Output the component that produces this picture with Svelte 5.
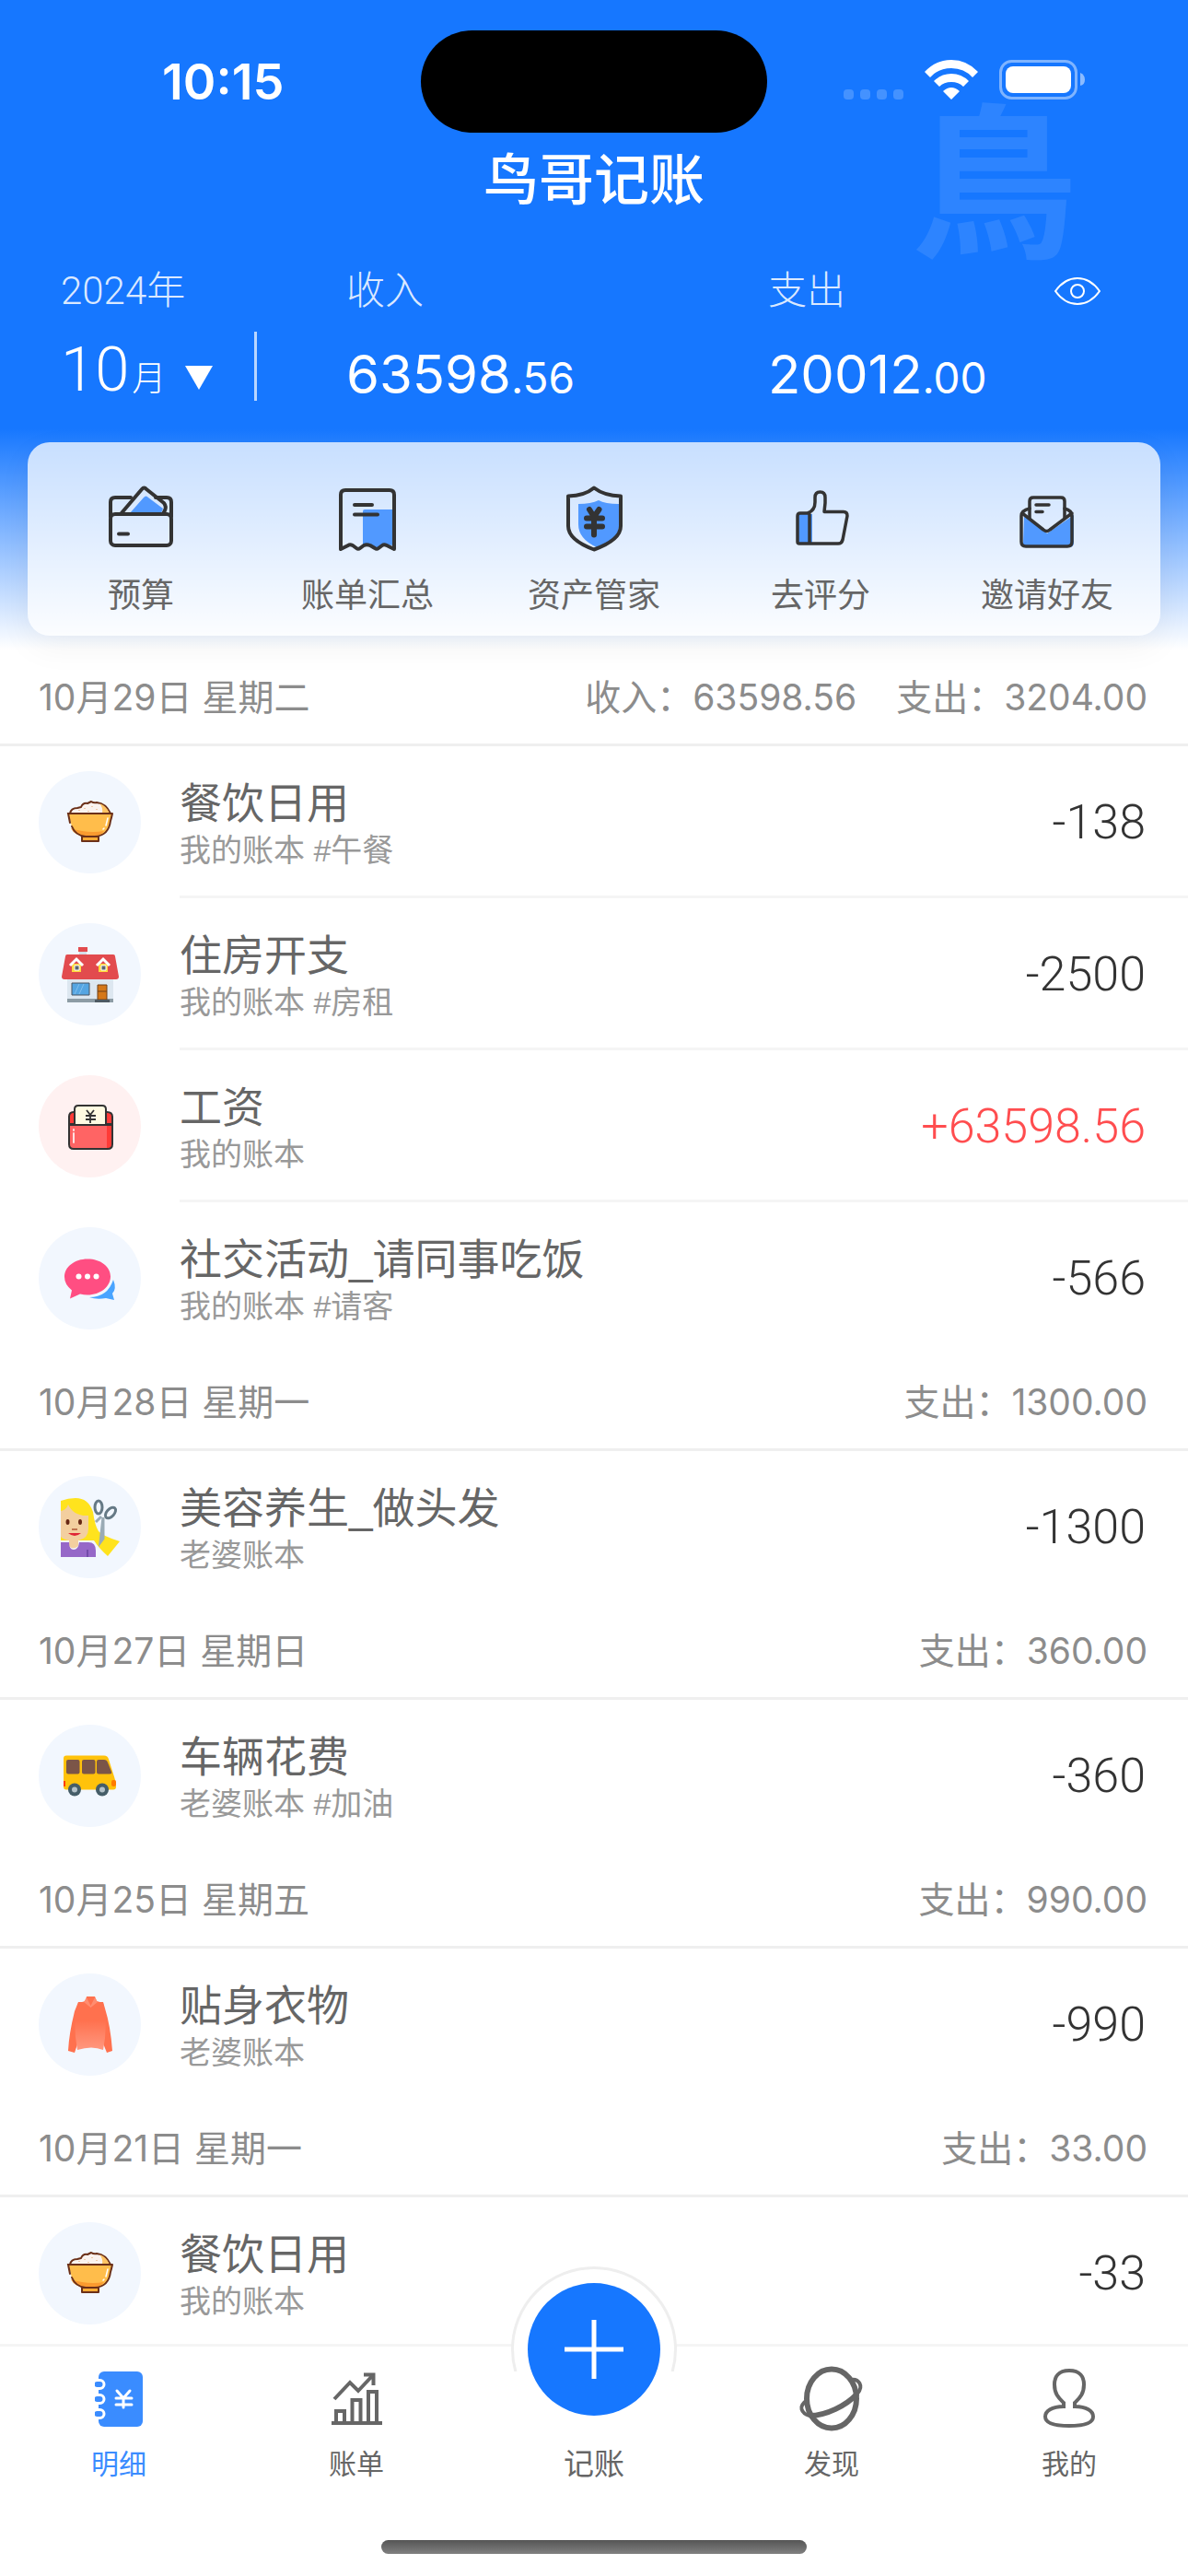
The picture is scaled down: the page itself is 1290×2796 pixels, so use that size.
<script>
  const actions = [
    { icon: 'wallet', label: '预算' },
    { icon: 'receipt', label: '账单汇总' },
    { icon: 'shield', label: '资产管家' },
    { icon: 'thumb', label: '去评分' },
    { icon: 'mail', label: '邀请好友' }
  ];

  const days = [
    {
      date: '10月29日 星期二',
      totals: ['收入：63598.56', '支出：3204.00'],
      items: [
        { icon: 'bowl', title: '餐饮日用', note: '我的账本 #午餐', amount: '-138' },
        { icon: 'house', title: '住房开支', note: '我的账本 #房租', amount: '-2500' },
        { icon: 'salary', title: '工资', note: '我的账本', amount: '+63598.56', income: true },
        { icon: 'chat', title: '社交活动_请同事吃饭', note: '我的账本 #请客', amount: '-566' }
      ]
    },
    {
      date: '10月28日 星期一',
      totals: ['支出：1300.00'],
      items: [{ icon: 'hair', title: '美容养生_做头发', note: '老婆账本', amount: '-1300' }]
    },
    {
      date: '10月27日 星期日',
      totals: ['支出：360.00'],
      items: [{ icon: 'bus', title: '车辆花费', note: '老婆账本 #加油', amount: '-360' }]
    },
    {
      date: '10月25日 星期五',
      totals: ['支出：990.00'],
      items: [{ icon: 'coat', title: '贴身衣物', note: '老婆账本', amount: '-990' }]
    },
    {
      date: '10月21日 星期一',
      totals: ['支出：33.00'],
      items: [{ icon: 'bowl', title: '餐饮日用', note: '我的账本', amount: '-33' }]
    }
  ];

  const tabs = [
    { icon: 'book', label: '明细', active: true },
    { icon: 'chart', label: '账单' },
    { icon: 'add', label: '记账' },
    { icon: 'planet', label: '发现' },
    { icon: 'person', label: '我的' }
  ];
</script>

{#snippet actionIcon(name)}
  <svg class="icon" viewBox="0 0 72 72" aria-hidden="true">
    {#if name === 'wallet'}
      <path class="fill" d="M24 26 39 9q2.500-3 5 0L60 21l-2 5z" />
      <g class="line">
        <path d="M3 30V14q0-5 5-5h17M52 9h12q5 0 5 5v16" />
        <path d="M14 27 37 0q2.500-3 5 0l19 15q3 4 1 8l-2 4" />
        <rect x="3" y="27" width="66" height="34" rx="5" />
        <path d="M12 48.500h10" />
      </g>
    {:else if name === 'receipt'}
      <path class="fill" d="M31 24q0-2 2-2h31v39l-9-1-9 4-10-4-5 1z" />
      <g class="line">
        <path d="M7 65V6q0-5 5-5h48q5 0 5 5v59l-8-4q-3-1.500-5 0l-4 3q-2 1.500-4 0l-5-3q-4-1.500-7 0l-4 3q-2 1.500-4 0l-4-3q-3-1.500-5 0z" />
        <path d="M22 17h19M22 27.500h25" />
      </g>
    {:else if name === 'shield'}
      <path class="fill" d="M19 16q14 0 22-4 7 4 22 4v25q0 14-24 22-20-9-20-25z" />
      <path class="line" d="M36-1.500Q26 7 8 7.500V40q0 15 28 25.500Q65 55 65 40V7.500Q47 7 36-1.500z" />
      <path class="line bold" d="m31 22 5 8 5.500-8M28 31.500h17M28 40.500h17M36 31v18.500" />
    {:else if name === 'thumb'}
      <path class="fill" d="M12 27h15v33H12z" />
      <path class="line slim" d="M24 59H13q-2 0-2-2V29q0-3 3-3h8q8-3 8-12V9q0-6 5.500-6T41 9v6l-1 9.500h21q4 0 4 4.500l-5 26q-1 4-5 4H24V27" />
    {:else if name === 'mail'}
      <path class="fill" d="m11 29 25 19 29-20v30q0 5-5 5H13q-3 0-3-4z" />
      <g class="line slim">
        <path d="M17 31V13q0-4 4-4h30q4 0 4 4v18" />
        <path d="M17 21q-9 2-9 8v28q0 5 5 5h45q5 0 5-5V29q0-6-8-8M9 26l23 18q3.500 3 7 0l24-18" />
        <path d="M24 17h14M24 24.500h7" />
      </g>
    {/if}
  </svg>
{/snippet}

{#snippet categoryIcon(name)}
  <svg class="icon" viewBox="0 0 72 72" aria-hidden="true">
    {#if name === 'bowl'}
      <path d="M14 26q1-6 8-6l4-1q2-5 7-4l4-2q3 2 6 1 10 1 15 12z" fill="#faf3ef" stroke="#6b3018" stroke-width="2" stroke-linejoin="round" />
      <path d="M46 15q8 3 11 11h-8q1-7-3-11z" fill="#ffc463" />
      <path d="M12 26h48q-1 5-2 8-2 16-17 17H31Q17 50 15 36z" fill="#ffbd4b" />
      <path d="M15 42q18 6 36 3-5 6-12 6h-8q-12-1-16-9z" fill="#fa9a2f" />
      <path d="M60 26q-1 5-2 8-2 16-17 17H31Q20 50 16 40M14 36l-2-10h48" fill="none" stroke="#6b3018" stroke-width="2" stroke-linecap="round" />
      <path d="M27 51h18v5H27z" fill="#ffab35" stroke="#6b3018" stroke-width="2" stroke-linejoin="round" />
      <path d="m55 31-2 8M51 42l-1 1" stroke="#fff" stroke-width="1.500" stroke-linecap="round" />
      <path d="M24 22v1M30 20v1M34 23v1M38 18v1M43 21v1" stroke="#eebf91" stroke-width="1.500" />
    {:else if name === 'house'}
      <path d="M24 9h8v8h-8z" fill="#d4dee8" />
      <path d="M23 6h10v5H23z" fill="#e24b4e" />
      <path d="M11 39h50v24H11z" fill="#dde7f0" />
      <path d="M11 62h50v4H11z" fill="#8d9ca5" />
      <path d="M11 14h50q2 0 2 2l4 22q0 3-3 3H8q-3 0-3-3l4-22q0-2 2-2z" fill="#e24b4e" />
      <path d="M16 24h10v9H16zM45 24h10v9H45z" fill="#ffd83f" />
      <path d="m14 26 7-7 7 7M43 26l7-7 7 7" fill="none" stroke="#fff" stroke-width="3" />
      <path d="M19 26h5v5h-5zM48 26h5v5h-5z" fill="#5a6570" stroke="#fff" />
      <path d="M16 45h19v13H16z" fill="#55a5e2" stroke="#485563" />
      <path d="m19 57 5-11m0 11 5-11" stroke="#82c0ee" />
      <path d="M44 47h10v16H44z" fill="#d57718" stroke="#6e3e16" />
      <path d="M44 54h10" stroke="#6e3e16" />
      <path d="M41 63h16v3H41z" fill="#4e5a63" />
    {:else if name === 'salary'}
      <path d="M13 33V25q0-5 5-5h36q6 0 6 5v8z" fill="#ff3b37" stroke="#333" stroke-width="2" />
      <path d="M19 34V17q0-4 4-4h26q4 0 4 4v17z" fill="#fffbe2" stroke="#333" stroke-width="2" />
      <path d="M13 34h47v21q0 5-5 5H18q-5 0-5-5z" fill="#ff6464" />
      <path d="M54 34h6v21q0 5-6 5z" fill="#ff3b37" />
      <path d="M13 34h47v21q0 5-5 5H18q-5 0-5-5z" fill="none" stroke="#333" stroke-width="2" />
      <path d="m32 18 4 5 4-5M31 24h11M31 28h11M36 23v9" fill="none" stroke="#333" stroke-width="1.800" />
      <path d="M18 43v10M18 39v1" stroke="#ffe1e1" stroke-width="2" stroke-linecap="round" />
    {:else if name === 'chat'}
      <path d="M61 37q4 10-1 15l2 7-9-2q-10 2-18-1 20 0 26-19z" fill="#49a4ff" />
      <path d="M33 14.500c14 0 25 8 25 19s-11 20-25 20q-4 0-8-1l-11 5 2-9Q8 42 8 34c0-11 11-19.500 25-19.500z" fill="#ff4e82" />
      <g fill="#fff"><circle cx="23.500" cy="33.500" r="3" /><circle cx="33" cy="33.500" r="3" /><circle cx="42.500" cy="33.500" r="3" /></g>
    {:else if name === 'hair'}
      <path d="M4 7Q12 4 20 4q14 0 19 15 2 15 6 21 4 5 23 11L55 67Q45 58 40 50H4z" fill="#ffe31d" />
      <path d="M4 18q6-1 8-7 6 13 22 12v14q0 11-11 13v6q-6 5-10 0v-6q-6-1-9-4z" fill="#f3cf9f" />
      <path d="M4 52h9q0 8 5 8t6-8h10q8 0 8 9v7H4z" fill="#9668c8" />
      <path d="M33 60v8" stroke="#744caa" stroke-width="2" />
      <ellipse cx="11.500" cy="30" rx="2" ry="3" fill="#672814" /><ellipse cx="25" cy="30" rx="2" ry="3" fill="#672814" />
      <path d="M16 38h6" stroke="#bf754f" stroke-width="2" />
      <path d="M12 42h14q-7 6-14 0z" fill="#df2535" />
      <path d="m42 30 6-6M50 25v23l-3 4z" fill="none" stroke="#9aabb5" stroke-width="3" />
      <g fill="none" stroke="#657985" stroke-width="3"><ellipse cx="45" cy="14" rx="4" ry="7" /><ellipse cx="58" cy="20" rx="4" ry="7" transform="rotate(42 58 20)" /></g>
    {:else if name === 'bus'}
      <path d="M10 13.500h41q4 0 5 4l6 19q2 5 2 11 0 3-3 3H10q-3 0-3-3v-31q0-3 3-3z" fill="#ffc20b" />
      <g fill="#7b5548"><rect x="10" y="18" width="14.500" height="15.500" rx="2" /><rect x="27" y="18" width="14.500" height="15.500" rx="2" /><path d="M45 18h6q3 0 4 3l4 10q1 2.500-2 2.500H45q-2 0-2-2V20q0-2 2-2z" /></g>
      <path d="M7 41h2v6H7z" fill="#ff3d00" /><rect x="59" y="40" width="5" height="7" rx="2" fill="#ff7b00" />
      <g fill="#455d68"><circle cx="19" cy="50.500" r="7" /><circle cx="49" cy="50.500" r="7" /></g>
      <g fill="#b4c2c9"><circle cx="19" cy="50.500" r="3" /><circle cx="49" cy="50.500" r="3" /></g>
    {:else if name === 'coat'}
      <defs><linearGradient id="coat" x2="0" y2="1"><stop offset=".45" stop-color="#ff714e" /><stop offset="1" stop-color="#ff9880" /></linearGradient></defs>
      <path d="m23 11-4 10Q13 45 12 64l7 2 3-9 28-1 4 10 6-2q-2-27-8-46l-2-7z" fill="#ff714e" />
      <path d="M32 5h9l2 5 7 2q4 16 2 38l-2 13q-12-5-28 0l-2-14q-2-24 3-37l8-2z" fill="url(#coat)" />
      <path d="m32 6 4.500 9L41 6l3 5-7.500 6L29 11z" fill="#ff8d70" />
    {/if}
  </svg>
{/snippet}

{#snippet tabIcon(name)}
  <svg class="icon" viewBox="0 0 72 72" aria-hidden="true">
    {#if name === 'book'}
      <rect x="14" y="6" width="48" height="60" rx="6" fill="#3a8cff" />
      <g fill="#3a8cff" stroke="#fff" stroke-width="3"><rect x="8" y="15.500" width="12" height="9" rx="4.500" /><rect x="8" y="31.500" width="12" height="9" rx="4.500" /><rect x="8" y="47.500" width="12" height="9" rx="4.500" /></g>
      <path d="M7 14h3v44H7z" fill="#fff" />
      <path d="m34 27 7 8 7-8M33 35h17M33 42h17M41 35v10" fill="none" stroke="#fff" stroke-width="3" stroke-linecap="round" />
    {:else if name === 'chart'}
      <path class="tab-line" d="M9 62h55M14 61V49h9v12M31.500 61V37h9v24M49 61V28h9v33M12 36l17-18 9 9L54 10M44 9.500h10.500V21" />
    {:else if name === 'planet'}
      <ellipse class="tab-line heavy" cx="36" cy="35.500" rx="27" ry="32" />
      <path class="tab-line" d="M11 36Q2 42 3.500 47T12 54c18 0 40-11 52-24 7-8 2-17-8-15" />
      <path class="tab-line heavy" d="M12 54c18 0 40-11 52-24" />
    {:else if name === 'person'}
      <path class="tab-line" d="M36 5c12 0 16 7 16 15 0 11-5 15-10 20v4c13 0 20 5 20 11 0 8-12 10-26 10S10 63 10 55c0-6 7-11 20-11v-4c-5-5-10-9-10-20C20 12 24 5 36 5z" />
    {/if}
  </svg>
{/snippet}

<div class="app" lang="zh-CN">
  <header class="top">
    <span class="watermark" aria-hidden="true">鳥</span>

    <div class="status">
      <time class="clock">10:15</time>
      <span class="island"></span>
      <div class="signals">
        <span class="dots"><i></i><i></i><i></i><i></i></span>
        <svg class="wifi" viewBox="0 0 58 43" aria-label="Wi-Fi" role="img">
          <path d="M0 13Q12 0 29 0t29 13l-6 6Q43 9 29 9T6 19zM10 23q8-8 19-8t19 8l-6 6q-5-5-13-5t-13 5zM20 34q9-8 18 0l-9 9z" />
        </svg>
        <svg class="battery" viewBox="0 0 93 43" aria-label="Battery" role="img">
          <rect x="1.500" y="1.500" width="82" height="40" rx="12" fill="none" stroke="#fff" stroke-opacity=".45" stroke-width="3" />
          <rect x="7" y="7" width="71" height="29" rx="8" />
          <path d="M88 14q5 2 5 7.500T88 28z" fill-opacity=".5" />
        </svg>
      </div>
    </div>

    <h1>鸟哥记账</h1>

    <section class="summary">
      <div class="month">
        <span class="label">2024年</span>
        <button class="value picker" type="button">
          <span class="month-number">10</span><span class="month-unit">月</span>
          <svg class="caret" viewBox="0 0 32 28" aria-hidden="true"><path d="M1 1h30L16 27z" /></svg>
        </button>
      </div>
      <div class="income">
        <span class="label">收入</span>
        <strong class="value money">63598<small>.56</small></strong>
      </div>
      <div class="expense">
        <span class="label">支出</span>
        <strong class="value money">20012<small>.00</small></strong>
      </div>
      <button class="eye" type="button" aria-label="隐藏金额">
        <svg viewBox="0 0 50 30" aria-hidden="true"><path d="M1 15Q11 1 25 1t24 14Q39 29 25 29T1 15z" /><circle cx="25" cy="15" r="7" /></svg>
      </button>
    </section>

    <nav class="actions">
      {#each actions as action}
        <button type="button">{@render actionIcon(action.icon)}<span>{action.label}</span></button>
      {/each}
    </nav>
  </header>

  <main>
    {#each days as day}
      <section>
        <div class="day">
          <h2>{day.date}</h2>
          <div class="totals">{#each day.totals as total}<span>{total}</span>{/each}</div>
        </div>
        <ul>
          {#each day.items as item}
            <li>
              <span class="badge" class:warm={item.income}>{@render categoryIcon(item.icon)}</span>
              <div class="entry">
                <div class="text"><h3>{item.title}</h3><p>{item.note}</p></div>
                <span class="amount" class:plus={item.income}>{item.amount}</span>
              </div>
            </li>
          {/each}
        </ul>
      </section>
    {/each}
  </main>

  <footer>
    <nav class="tabs">
      {#each tabs as tab}
        {#if tab.icon === 'add'}
          <button class="tab add" type="button">
            <span class="ring"></span>
            <span class="disc"><svg viewBox="0 0 66 66" aria-hidden="true"><path d="M33 1v64M1 33h64" /></svg></span>
            <span>{tab.label}</span>
          </button>
        {:else}
          <button class="tab" class:active={tab.active} type="button">{@render tabIcon(tab.icon)}<span>{tab.label}</span></button>
        {/if}
      {/each}
    </nav>
    <div class="home"></div>
  </footer>
</div>

<style>
  :global(body) { margin: 0; background: #fff; }

  .app {
    height: 100vh;
    display: flex;
    flex-direction: column;
    font-family: 'Noto Sans CJK SC', sans-serif;
    color: #666;
    background: #fff;
  }
  h1, h2, h3, p, ul { margin: 0; padding: 0; font-weight: 400; }
  ul { list-style: none; }
  button { margin: 0; padding: 0; border: 0; background: none; color: inherit; font: inherit; cursor: pointer; }
  svg { display: block; }
  .icon { width: 72px; height: 72px; overflow: visible; }

  .top {
    position: relative;
    flex: none;
    padding-bottom: 15px;
    color: #fff;
    background: linear-gradient(#1677ff calc(100% - 240px), #fff);
  }
  .watermark {
    position: absolute;
    top: 92px;
    right: 120px;
    font-size: 180px;
    line-height: 190px;
    font-weight: 700;
    font-family: 'Noto Sans CJK TC', sans-serif;
    color: rgba(255, 255, 255, 0.1);
  }

  .status { position: relative; display: grid; grid-template-columns: 1fr 376px 1fr; align-items: center; padding-top: 33px; }
  .clock { padding-left: 176px; font: 600 54px/60px Inter, sans-serif; }
  .island { height: 111px; border-radius: 56px; background: #000; }
  .signals { display: flex; justify-content: flex-end; align-items: flex-end; gap: 23px; padding: 0 112px 4px 0; fill: #fff; }
  .dots { display: flex; gap: 7px; }
  .dots i { width: 11px; height: 11px; border-radius: 4px; background: rgba(255, 255, 255, 0.2); }
  .wifi { width: 58px; height: 43px; }
  .battery { width: 93px; height: 43px; }

  h1 { position: relative; margin-top: 5px; text-align: center; font-size: 60px; line-height: 84px; font-weight: 500; }

  .summary { position: relative; display: grid; grid-template-columns: 310px 458px 1fr auto; margin-top: 58px; padding: 0 95px 0 66px; }
  .label { display: block; font: 300 42px/50px Roboto, 'Noto Sans CJK SC', sans-serif; color: rgba(255, 255, 255, 0.85); }
  .value { display: flex; align-items: baseline; height: 75px; margin-top: 19px; }
  .picker { width: 213px; border-right: 3px solid rgba(255, 255, 255, 0.7); }
  .month-number { font: 300 67px/83px Roboto, sans-serif; }
  .month-unit { margin-left: 3px; font-size: 37px; line-height: 48px; font-weight: 300; }
  .caret { width: 32px; height: 28px; margin: 0 0 7px 20px; fill: #fff; }
  .money { font: 400 58px/92px Inter, sans-serif; }
  .money small { font-size: 46px; }
  .eye { height: 50px; display: flex; align-items: center; }
  .eye svg { width: 50px; height: 30px; fill: none; stroke: #fff; stroke-width: 2; overflow: visible; }

  .actions {
    display: grid;
    grid-template-columns: repeat(5, 1fr);
    margin: 45px 30px 0;
    padding: 51px 0 23px;
    border-radius: 24px;
    background: rgba(255, 255, 255, 0.75);
    box-shadow: 0 12px 36px rgba(0, 0, 0, 0.05);
  }
  .actions button { display: flex; flex-direction: column; align-items: center; gap: 16px; font-size: 36px; line-height: 48px; color: #666; }
  .actions .fill { fill: #5199ff; }
  .line { fill: none; stroke: #333; stroke-width: 4; stroke-linecap: round; stroke-linejoin: round; }
  .line.bold { stroke-width: 6; }
  .line.slim { stroke-width: 3.5; }

  main { flex: 1; min-height: 0; overflow-y: auto; scrollbar-width: none; }
  .day {
    box-sizing: border-box;
    display: flex;
    justify-content: space-between;
    align-items: center;
    height: 105px;
    padding: 2px 44px 0 42px;
    border-bottom: 3px solid #efefef;
    font: 400 39px/48px Inter, 'Noto Sans CJK SC', sans-serif;
    color: #8c8c8c;
  }
  .day h2 { font: inherit; }
  .totals { display: flex; gap: 43px; }

  li { display: flex; height: 165px; padding-left: 42px; gap: 42px; }
  .badge { flex: none; display: grid; place-items: center; width: 111px; height: 111px; margin-top: 27px; border-radius: 50%; background: #f2f7fe; }
  .badge.warm { background: #fff1f1; }
  .entry { flex: 1; display: flex; justify-content: space-between; align-items: center; padding: 4px 46px 0 0; border-bottom: 3px solid #f5f5f5; }
  li:last-child .entry { border-color: transparent; }
  .text { padding-top: 4px; font-family: 'Liberation Sans', 'Noto Sans CJK SC', sans-serif; }
  h3 { font-size: 46px; line-height: 56px; color: #666; }
  .text p { font-size: 34px; line-height: 46px; color: #999; }
  .amount { font: 300 52px/60px Roboto, sans-serif; color: #333; }
  .amount.plus { color: #ff4d4f; }

  footer { position: relative; flex: none; border-top: 3px solid #f5f5f5; background: #fff; }
  .tabs { display: grid; grid-template-columns: repeat(5, 1fr); }
  .tab { position: relative; display: flex; flex-direction: column; align-items: center; gap: 12px; padding-top: 21px; font-size: 30px; line-height: 40px; color: #666; }
  .tab.active { color: #3a8cff; }
  .tab.add { justify-content: flex-end; font-size: 33px; }
  .tab-line { fill: none; stroke: #666; stroke-width: 4; }
  .tab-line.heavy { stroke-width: 6; }
  .ring { position: absolute; top: -87px; left: calc(50% - 90px); width: 180px; height: 114px; overflow: hidden; }
  .ring::before { content: ''; display: block; box-sizing: border-box; width: 180px; height: 180px; border: 3px solid #eee; border-radius: 50%; background: #fff; }
  .disc { position: absolute; top: -69px; left: calc(50% - 72px); display: grid; place-items: center; width: 144px; height: 144px; border-radius: 50%; background: #1677ff; }
  .disc svg { width: 66px; height: 66px; fill: none; stroke: #fff; stroke-width: 5; }
  .home { width: 462px; height: 15px; margin: 65px auto 24px; border-radius: 8px; background: linear-gradient(#555, #808080); }
</style>
